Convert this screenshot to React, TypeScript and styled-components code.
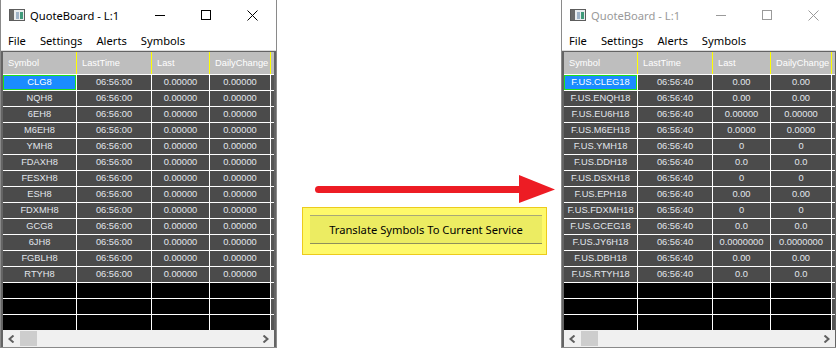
import React from 'react'
import styled, { createGlobalStyle } from 'styled-components'

const GlobalStyle = createGlobalStyle`
    html, body {
        margin: 0;
        padding: 0;
        background: #ffffff;
        overflow: hidden;
    }
`

const uiFont = '"Noto Sans", "Open Sans", sans-serif'
const gridFont = '"Liberation Sans", Arial, sans-serif'

const COLS = [73, 74, 57, 60]

const Page = styled.div`
    display: flex;
    width: 836px;
    height: 350px;
    overflow: hidden;
    background: #ffffff;
`

const Window = styled.div`
    flex: 0 0 277px;
    width: 277px;
    height: 348px;
    box-sizing: border-box;
    border: 1px solid #8a8a8a;
    border-top: none;
    display: flex;
    flex-direction: column;
    background: #ffffff;
`

const TitleBar = styled.div`
    height: 30px;
    display: flex;
    align-items: center;
    padding-left: 8px;
`

const Title = styled.span<{ $active: boolean }>`
    margin-left: 5px;
    font-family: ${uiFont};
    font-size: 11.2px;
    color: ${(props) => (props.$active ? '#000000' : '#9a9a9a')};
    flex: 1;
`

const CaptionButton = styled.div`
    width: 46px;
    height: 30px;
    display: flex;
    align-items: center;
    justify-content: center;
`

const MenuBar = styled.div`
    height: 20px;
    display: flex;
    align-items: center;
    gap: 14px;
    padding-left: 7px;
    font-family: ${uiFont};
    font-size: 11.2px;
    color: #000000;
    border-bottom: 1px solid #dcdcdc;
`

const Grid = styled.div`
    flex: 1;
    display: flex;
    flex-direction: column;
    background: #555555;
    border-top: 1px solid #646464;
    border-left: 2px solid #646464;
    border-right: 2px solid #646464;
`

const HeaderRow = styled.div`
    display: flex;
    height: 22px;
    background: #bebebe;
    border-bottom: 1px solid #ffffff;
`

const HeaderCell = styled.div<{ $w: number }>`
    box-sizing: border-box;
    width: ${(props) => props.$w + 1}px;
    padding-left: 5px;
    border-right: 1px solid #ffff00;
    font-family: ${gridFont};
    font-size: 9.3px;
    line-height: 22px;
    color: #ffffff;
    white-space: nowrap;
    overflow: hidden;
`

const Row = styled.div<{ $last?: boolean }>`
    display: flex;
    height: ${(props) => (props.$last ? 15 : 16)}px;
    box-sizing: border-box;
    border-bottom: ${(props) => (props.$last ? 'none' : '1px solid #ffffff')};
`

const Cell = styled.div<{ $w: number; $selected?: boolean; $empty?: boolean }>`
    box-sizing: border-box;
    width: ${(props) => props.$w + 1}px;
    border-right: 1px solid #ffffff;
    background: ${(props) => (props.$empty ? '#000000' : props.$selected ? '#1a8cff' : '#4b4b4b')};
    box-shadow: ${(props) => (props.$selected ? 'inset 0 0 0 1px #1ee01e' : 'none')};
    font-family: ${gridFont};
    font-size: 9.3px;
    line-height: 15px;
    text-align: center;
    color: ${(props) => (props.$selected ? '#ffffff' : '#e2e6ec')};
    white-space: nowrap;
    overflow: hidden;
`

const ScrollBar = styled.div`
    height: 17px;
    display: flex;
    align-items: center;
    background: #f0f0f0;
`

const ScrollButton = styled.div`
    width: 17px;
    height: 17px;
    display: flex;
    align-items: center;
    justify-content: center;
`

const Thumb = styled.div`
    width: 17px;
    height: 15px;
    background: #cdcdcd;
`

const Spacer = styled.div`
    flex: 1;
`

const Middle = styled.div`
    flex: 0 0 284px;
    display: flex;
    flex-direction: column;
    padding-top: 175px;
    box-sizing: border-box;
`

const Arrow = styled.svg`
    margin-left: 35px;
    display: block;
`

const Callout = styled.div`
    margin: 4px 0 0 25px;
    width: 245px;
    height: 48px;
    box-sizing: border-box;
    padding: 7px 4px 10px 7px;
    background: #fef96a;
    border: 1px solid #eccb1c;
`

const TranslateButton = styled.div`
    height: 29px;
    box-sizing: border-box;
    background: #ecec62;
    border-top: 1px solid #a8a878;
    border-bottom: 1px solid #8e8e5c;
    font-family: ${uiFont};
    font-size: 11.2px;
    line-height: 27px;
    text-align: center;
    color: #000000;
`

type Quote = { symbol: string; time: string; last: string; change: string }

const leftQuotes: Quote[] = [
    'CLG8', 'NQH8', '6EH8', 'M6EH8', 'YMH8', 'FDAXH8', 'FESXH8', 'ESH8', 'FDXMH8', 'GCG8', '6JH8', 'FGBLH8', 'RTYH8',
].map((s) => ({ symbol: s, time: '06:56:00', last: '0.00000', change: '0.00000' }))

const rightQuotes: Quote[] = [
    ['F.US.CLEG18', '0.00'],
    ['F.US.ENQH18', '0.00'],
    ['F.US.EU6H18', '0.00000'],
    ['F.US.M6EH18', '0.0000'],
    ['F.US.YMH18', '0'],
    ['F.US.DDH18', '0.0'],
    ['F.US.DSXH18', '0'],
    ['F.US.EPH18', '0.00'],
    ['F.US.FDXMH18', '0'],
    ['F.US.GCEG18', '0.0'],
    ['F.US.JY6H18', '0.0000000'],
    ['F.US.DBH18', '0.00'],
    ['F.US.RTYH18', '0.0'],
].map(([s, v]) => ({ symbol: s, time: '06:56:40', last: v, change: v }))

const AppIcon = () => (
    <svg width="16" height="12" viewBox="0 0 16 12">
        <rect x="0.5" y="0.5" width="15" height="11" fill="#e9ecef" stroke="#5c5c5c" />
        <rect x="1" y="1" width="4" height="10" fill="#6a6a6a" />
        <rect x="7" y="3" width="3" height="7" fill="#9fb3c8" />
        <rect x="11" y="3" width="3" height="7" fill="#3f9a7a" />
    </svg>
)

const Caption = ({ color }: { color: string }) => (
    <>
        <CaptionButton>
            <svg width="10" height="10" viewBox="0 0 10 10">
                <line x1="0" y1="5.5" x2="10" y2="5.5" stroke={color} strokeWidth="1" />
            </svg>
        </CaptionButton>
        <CaptionButton>
            <svg width="10" height="10" viewBox="0 0 10 10">
                <rect x="0.5" y="0.5" width="9" height="9" fill="none" stroke={color} strokeWidth="1" />
            </svg>
        </CaptionButton>
        <CaptionButton style={{ marginRight: 1 }}>
            <svg width="11" height="11" viewBox="0 0 11 11">
                <path d="M0.5 0.5 L10.5 10.5 M10.5 0.5 L0.5 10.5" stroke={color} strokeWidth="1" />
            </svg>
        </CaptionButton>
    </>
)

const Chevron = ({ dir }: { dir: 'left' | 'right' }) => (
    <svg width="7" height="8" viewBox="0 0 7 8">
        <path
            d={dir === 'left' ? 'M5.5 0.5 L1.5 4 L5.5 7.5' : 'M1.5 0.5 L5.5 4 L1.5 7.5'}
            fill="none"
            stroke="#606060"
            strokeWidth="2"
        />
    </svg>
)

const QuoteBoard = ({ quotes, active }: { quotes: Quote[]; active: boolean }) => (
    <Window>
        <TitleBar>
            <AppIcon />
            <Title $active={active}>QuoteBoard - L:1</Title>
            <Caption color={active ? '#000000' : '#9a9a9a'} />
        </TitleBar>
        <MenuBar>
            <span>File</span>
            <span>Settings</span>
            <span>Alerts</span>
            <span>Symbols</span>
        </MenuBar>
        <Grid>
            <HeaderRow>
                {['Symbol', 'LastTime', 'Last', 'DailyChange'].map((h, i) => (
                    <HeaderCell key={h} $w={COLS[i]}>{h}</HeaderCell>
                ))}
            </HeaderRow>
            {quotes.map((q, r) => (
                <Row key={q.symbol}>
                    <Cell $w={COLS[0]} $selected={r === 0}>{q.symbol}</Cell>
                    <Cell $w={COLS[1]}>{q.time}</Cell>
                    <Cell $w={COLS[2]}>{q.last}</Cell>
                    <Cell $w={COLS[3]}>{q.change}</Cell>
                </Row>
            ))}
            {[0, 1, 2].map((r) => (
                <Row key={'empty' + r} $last={r === 2}>
                    {COLS.map((w, i) => (
                        <Cell key={i} $w={w} $empty />
                    ))}
                </Row>
            ))}
            <ScrollBar>
                <ScrollButton><Chevron dir="left" /></ScrollButton>
                <Thumb />
                <Spacer />
                <ScrollButton><Chevron dir="right" /></ScrollButton>
            </ScrollBar>
        </Grid>
    </Window>
)

export default function App() {
    return (
        <Page>
            <GlobalStyle />
            <QuoteBoard quotes={leftQuotes} active />
            <Middle>
                <Arrow width="244" height="28" viewBox="0 0 244 28">
                    <line x1="6.5" y1="14.5" x2="210" y2="14.5" stroke="#ed1c24" strokeWidth="7" strokeLinecap="round" />
                    <polygon points="207,0 243,14.5 207,28" fill="#ed1c24" />
                </Arrow>
                <Callout>
                    <TranslateButton>Translate Symbols To Current Service</TranslateButton>
                </Callout>
            </Middle>
            <QuoteBoard quotes={rightQuotes} active={false} />
        </Page>
    )
}
